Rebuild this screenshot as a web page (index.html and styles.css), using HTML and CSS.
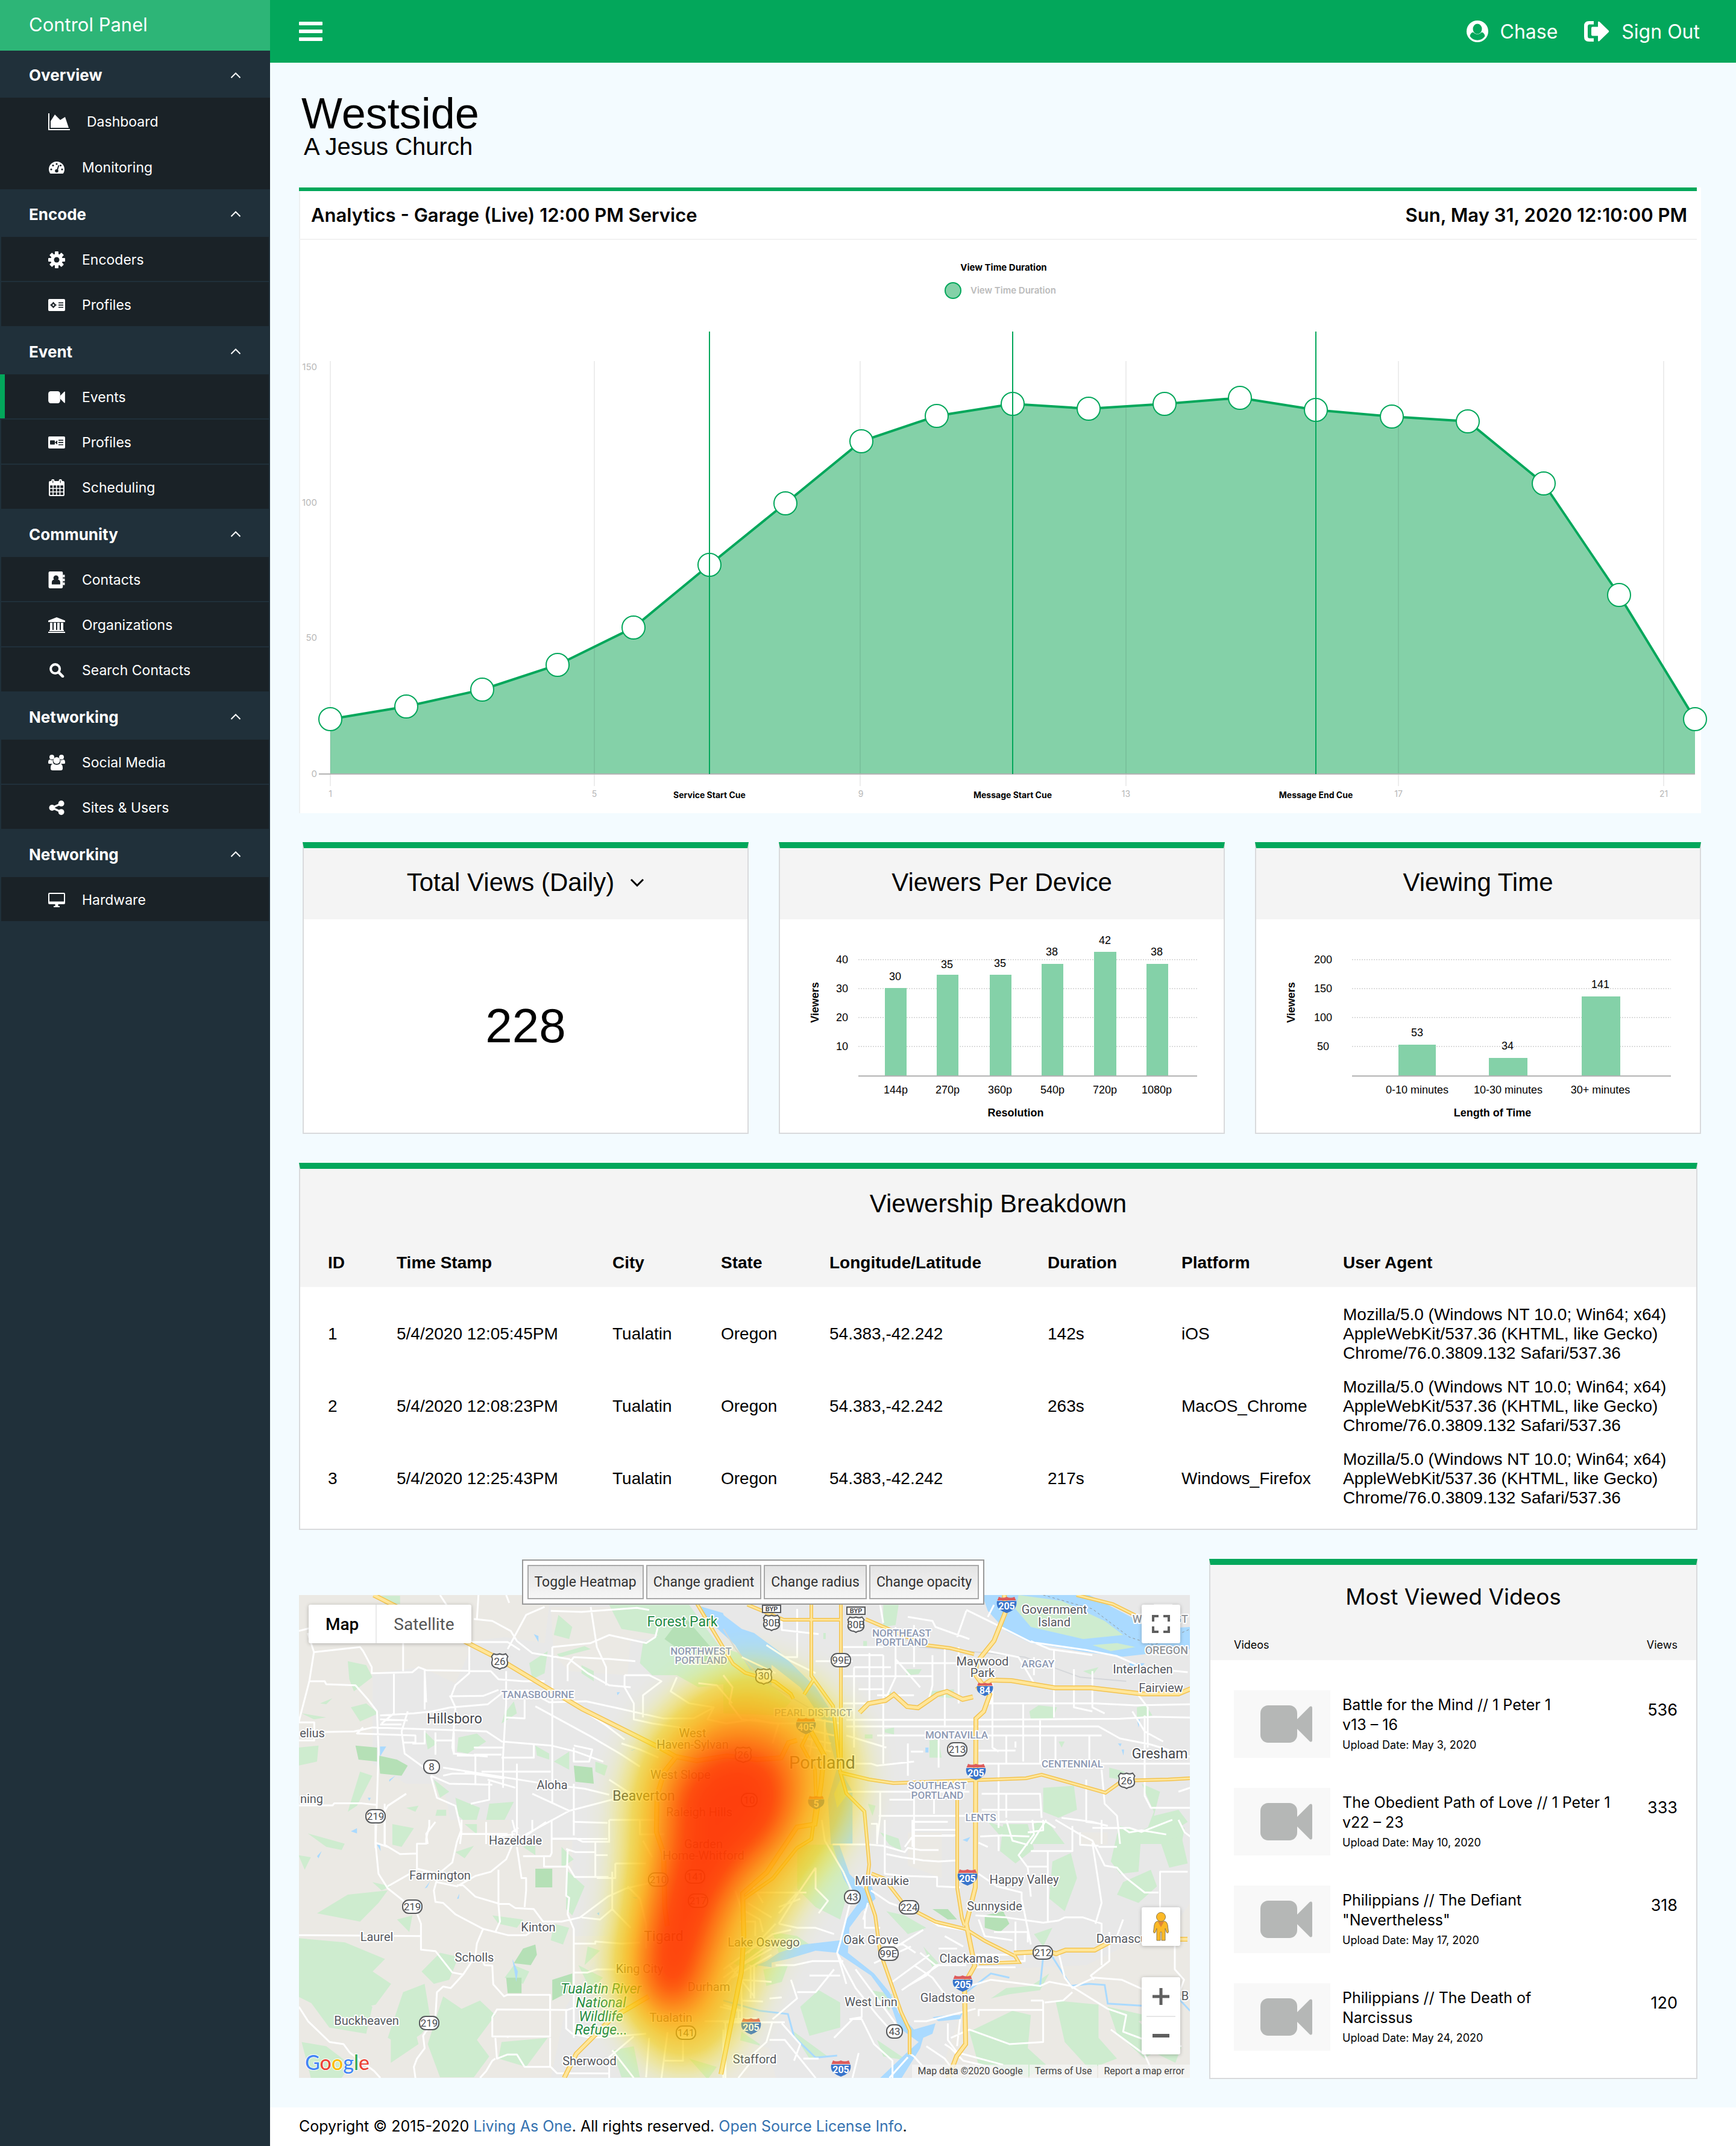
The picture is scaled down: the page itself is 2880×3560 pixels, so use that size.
FILE: index.html
```html
<!DOCTYPE html>
<html lang="en">
<head>
<meta charset="utf-8">
<meta name="viewport" content="width=device-width, initial-scale=1">
<title>Control Panel - Analytics</title>
<link rel="stylesheet" href="styles.css">
</head>
<body>

<svg class="sprite" aria-hidden="true">
  <symbol id="i-area" viewBox="0 0 36 28"><path d="M0 0h2v26h34v2H0z"/><path d="M4 24V13l7-11 9 9 8-5 6 18z"/></symbol>
  <symbol id="i-gauge" viewBox="0 0 26 20"><path d="M13 0a13 13 0 0 1 13 13c0 2.400-.7 4.500-1.800 6.300-.3.500-.7.700-1.200.7H3c-.5 0-.9-.2-1.200-.7A12.500 12.500 0 0 1 0 13 13 13 0 0 1 13 0z"/><g class="cut"><circle cx="4" cy="13" r="1.600"/><circle cx="7" cy="6.500" r="1.600"/><circle cx="13" cy="4" r="1.600"/><circle cx="19.500" cy="6.500" r="1.600"/><circle cx="22" cy="13" r="1.600"/><circle cx="13" cy="15.500" r="2.800"/><path d="M15.600 6l1.800.5-3 9.500-1.900-.6z"/></g></symbol>
  <symbol id="i-gear" viewBox="0 0 28 28"><circle cx="14" cy="14" r="10"/><g><rect x="11" width="6" height="28" rx="1"/><rect x="11" width="6" height="28" rx="1" transform="rotate(45 14 14)"/><rect x="11" width="6" height="28" rx="1" transform="rotate(90 14 14)"/><rect x="11" width="6" height="28" rx="1" transform="rotate(135 14 14)"/></g><circle class="cut" cx="14" cy="14" r="4.500"/></symbol>
  <symbol id="i-card-gear" viewBox="0 0 28 20"><rect width="28" height="20" rx="2"/><g class="cut"><circle cx="8.500" cy="10" r="3.600"/><path d="M7.500 5h2v10h-2zM3.500 9h10v2h-10z"/><path d="M17 5.500h8v1.700h-8zM17 9.200h8v1.700h-8zM17 12.900h8v1.700h-8z"/></g><circle cx="8.500" cy="10" r="1.500"/></symbol>
  <symbol id="i-video" viewBox="0 0 86 62"><rect width="61" height="62" rx="13"/><path d="M61 23L82 2q4-2 4 3v52q0 5-4 3L61 39z"/></symbol>
  <symbol id="i-card-video" viewBox="0 0 28 20"><rect width="28" height="20" rx="2"/><g class="cut"><rect x="3" y="6.500" width="8" height="7" rx="1"/><path d="M11 10l4-3.500v7zM17 5.500h8v1.700h-8zM17 9.200h8v1.700h-8zM17 12.900h8v1.700h-8z"/></g></symbol>
  <symbol id="i-calendar" viewBox="0 0 25 27"><path d="M2 3h21q2 0 2 2v20q0 2-2 2H2q-2 0-2-2V5q0-2 2-2z"/><rect x="4" width="5" height="7" rx="2"/><rect x="16" width="5" height="7" rx="2"/><path class="cut" d="M6 2h1v4H6zM18 2h1v4h-1zM2 10h4v4H2zM7.500 10h4v4h-4zM13 10h4v4h-4zM18.500 10H23v4h-4.500zM2 15.500h4v4H2zM7.500 15.500h4v4h-4zM13 15.500h4v4h-4zM18.500 15.500H23v4h-4.500zM2 21h4v4H2zM7.500 21h4v4h-4zM13 21h4v4h-4zM18.500 21H23v4h-4.500z"/></symbol>
  <symbol id="i-contact" viewBox="0 0 25 26"><rect width="22" height="26" rx="2"/><path d="M22 5h3v4h-3zM22 11h3v4h-3zM22 17h3v4h-3z"/><g class="cut"><circle cx="11.500" cy="10" r="4"/><path d="M5 20v-3q0-4 3.500-4.500 3 2 6 0Q18 13 18 17v3z"/></g></symbol>
  <symbol id="i-bank" viewBox="0 0 28 26"><path d="M14 0l14 5.500V8H0V5.500zM3 9h4v12H3zM9 9h4v12H9zM15 9h4v12h-4zM21 9h4v12h-4zM2 21h24v2H2zM0 24h28v2H0z"/></symbol>
  <symbol id="i-search" viewBox="0 0 25 25"><circle cx="10" cy="10" r="7.800" fill="none" stroke="currentColor" stroke-width="4.200"/><path d="M16 16l7 7" stroke="currentColor" stroke-width="4.600" stroke-linecap="round"/></symbol>
  <symbol id="i-users" viewBox="0 0 28 26"><circle cx="6" cy="4" r="4"/><circle cx="22" cy="4" r="4"/><path d="M0 14q-.3-6 3-6 3 2 5 .5-1 4 1 6.500H2q-2 0-2-1zM28 14q.3-6-3-6-3 2-5 .5 1 4-1 6.500h7q2 0 2-1z"/><circle cx="14" cy="9.500" r="5.500"/><path d="M4 23q-.3-8 4.500-8 5.500 3.500 11 0 4.800 0 4.500 8 0 3-3.500 3h-13Q4 26 4 23z"/></symbol>
  <symbol id="i-share" viewBox="0 0 23 22"><circle cx="18.500" cy="4.500" r="4.500"/><circle cx="4.500" cy="11" r="4.500"/><circle cx="18.500" cy="17.500" r="4.500"/><path d="M18.500 4.500L4.500 11l14 6.500" fill="none" stroke="currentColor" stroke-width="3"/></symbol>
  <symbol id="i-monitor" viewBox="0 0 28 24"><path fill-rule="evenodd" d="M2 0h24q2 0 2 2v15q0 2-2 2H16.500v3H19v2H9v-2h2.500v-3H2q-2 0-2-2V2q0-2 2-2zm0 2v12.500h24V2z"/></symbol>
  <symbol id="i-up" viewBox="0 0 18 10"><path d="M1.500 9L9 1.500 16.500 9" fill="none" stroke="currentColor" stroke-width="2"/></symbol>
  <symbol id="i-user" viewBox="0 0 36 36"><circle cx="18" cy="18" r="18"/><ellipse class="cut-bar" cx="18" cy="14" rx="7.500" ry="8.500"/><path class="cut-bar" d="M5.500 26q1-6 5.500-6.500 7 7 14 0 4.500.5 5.500 6.500a15 15 0 0 1-25 0z"/></symbol>
  <symbol id="i-out" viewBox="0 0 42 34"><path d="M16 0v5.500H9Q6 5.500 6 9v16q0 3.500 3 3.500h7V34H8q-8 0-8-8V8q0-8 8-8z"/><path d="M12 11.500q0-2 2-2h9V2q0-2.500 2.500-1l15 14.500q1.500 1.500 0 3L25.500 33q-2.500 1.500-2.500-1v-7.500h-9q-2 0-2-2z"/></symbol>
  <symbol id="s-us" viewBox="0 0 30 28"><path d="M5 1.500q5 2.500 10 0 5 2.500 10 0L28.500 6q-2.500 4-.5 9 1 7-6 9.500-5 .5-7 2.500-2-2-7-2.500-7-2.500-6-9.500 2-5-.5-9z" fill="#fff" stroke="#57595c" stroke-width="2"/></symbol>
  <symbol id="s-state" viewBox="0 0 34 24"><rect x="1" y="1" width="32" height="22" rx="10" fill="#fff" stroke="#57595c" stroke-width="2"/></symbol>
  <symbol id="s-route" viewBox="0 0 28 24"><rect x="1" y="1" width="26" height="22" rx="10" fill="#fff" stroke="#57595c" stroke-width="2"/></symbol>
  <symbol id="s-int" viewBox="0 0 34 28"><path d="M4 1q6.500 3 13 0 6.500 3 13 0l2.500 6h-31z" fill="#dc5c5c"/><path d="M1 8h32q1.500 8-3.500 13-5 4.500-12.500 7-7.500-2.500-12.500-7Q-.5 16 1 8z" fill="#3874cb"/></symbol>
</svg>

<div class="app">
  <aside class="sidebar">
    <div class="sidebar-title">Control Panel</div>
    <nav>
      <button class="group group-first" type="button">Overview<svg class="chev"><use href="#i-up"/></svg></button>
      <ul class="items items-plain">
        <li><a href="#"><svg class="ic ic-area"><use href="#i-area"/></svg>Dashboard</a></li>
        <li><a href="#"><svg class="ic"><use href="#i-gauge"/></svg>Monitoring</a></li>
      </ul>
      <button class="group" type="button">Encode<svg class="chev"><use href="#i-up"/></svg></button>
      <ul class="items">
        <li><a href="#"><svg class="ic ic-tall"><use href="#i-gear"/></svg>Encoders</a></li>
        <li><a href="#"><svg class="ic"><use href="#i-card-gear"/></svg>Profiles</a></li>
      </ul>
      <button class="group" type="button">Event<svg class="chev"><use href="#i-up"/></svg></button>
      <ul class="items">
        <li class="active"><a href="#"><svg class="ic"><use href="#i-video"/></svg>Events</a></li>
        <li><a href="#"><svg class="ic"><use href="#i-card-video"/></svg>Profiles</a></li>
        <li><a href="#"><svg class="ic ic-tall"><use href="#i-calendar"/></svg>Scheduling</a></li>
      </ul>
      <button class="group" type="button">Community<svg class="chev"><use href="#i-up"/></svg></button>
      <ul class="items">
        <li><a href="#"><svg class="ic ic-tall"><use href="#i-contact"/></svg>Contacts</a></li>
        <li><a href="#"><svg class="ic ic-tall"><use href="#i-bank"/></svg>Organizations</a></li>
        <li><a href="#"><svg class="ic ic-mid"><use href="#i-search"/></svg>Search Contacts</a></li>
      </ul>
      <button class="group" type="button">Networking<svg class="chev"><use href="#i-up"/></svg></button>
      <ul class="items">
        <li><a href="#"><svg class="ic ic-tall"><use href="#i-users"/></svg>Social Media</a></li>
        <li><a href="#"><svg class="ic ic-mid"><use href="#i-share"/></svg>Sites &amp; Users</a></li>
      </ul>
      <button class="group" type="button">Networking<svg class="chev"><use href="#i-up"/></svg></button>
      <ul class="items">
        <li><a href="#"><svg class="ic ic-mid"><use href="#i-monitor"/></svg>Hardware</a></li>
      </ul>
    </nav>
  </aside>

  <div class="page">
    <header class="topbar">
      <button class="burger" type="button" aria-label="Toggle menu"><span></span><span></span><span></span></button>
      <nav class="account">
        <a href="#"><svg class="ic-user"><use href="#i-user"/></svg>Chase</a>
        <a href="#"><svg class="ic-out"><use href="#i-out"/></svg>Sign Out</a>
      </nav>
    </header>

    <main class="content">
      <div class="brand">
        <h1>Westside</h1>
        <p>A Jesus Church</p>
      </div>

      <section class="chart-card">
        <div class="chart-head">
          <h2>Analytics - Garage (Live) 12:00 PM Service</h2>
          <time datetime="2020-05-31T12:10">Sun, May 31, 2020 12:10:00 PM</time>
        </div>
        <svg class="chart" viewBox="0 0 2324 951" role="img" aria-label="View Time Duration">
          <text class="c-strong" x="1167" y="51">View Time Duration</text>
          <circle cx="1083" cy="84" r="13" fill="#84d1a8" stroke="#03a75b" stroke-width="2"/>
          <text class="c-legend" x="1112" y="89">View Time Duration</text>
          <polygon fill="#84d1a8" points="50,886 50,795 176,774 302,746 427,705 553,643 679,539 805,437 931,334 1056,292 1182,272 1308,280 1434,272 1559,262 1685,282 1811,293 1937,301 2063,404 2188,589 2314,795 2314,886"/>
          <path class="c-grid" d="M50 201V906M488 201V906M929 201V906M1370 201V906M1822 201V906M2262 201V906"/>
          <path d="M31 886H2314" stroke="#b3b3b3" stroke-width="2"/>
          <polyline fill="none" stroke="#03a75b" stroke-width="4" points="50,795 176,774 302,746 427,705 553,643 679,539 805,437 931,334 1056,292 1182,272 1308,280 1434,272 1559,262 1685,282 1811,293 1937,301 2063,404 2188,589 2314,795"/>
          <g fill="#fff" stroke="#03a75b" stroke-width="2">
            <circle cx="50" cy="795" r="19"/><circle cx="176" cy="774" r="19"/><circle cx="302" cy="746" r="19"/><circle cx="427" cy="705" r="19"/><circle cx="553" cy="643" r="19"/><circle cx="679" cy="539" r="19"/><circle cx="805" cy="437" r="19"/><circle cx="931" cy="334" r="19"/><circle cx="1056" cy="292" r="19"/><circle cx="1182" cy="272" r="19"/><circle cx="1308" cy="280" r="19"/><circle cx="1434" cy="272" r="19"/><circle cx="1559" cy="262" r="19"/><circle cx="1685" cy="282" r="19"/><circle cx="1811" cy="293" r="19"/><circle cx="1937" cy="301" r="19"/><circle cx="2063" cy="404" r="19"/><circle cx="2188" cy="589" r="19"/><circle cx="2314" cy="795" r="19"/>
          </g>
          <path d="M679 152V886M1182 152V886M1685 152V886" stroke="#03a75b" stroke-width="2"/>
          <g class="c-y"><text x="28" y="216">150</text><text x="28" y="441">100</text><text x="28" y="665">50</text><text x="28" y="891">0</text></g>
          <g class="c-x"><text x="50" y="924">1</text><text x="488" y="924">5</text><text x="930" y="924">9</text><text x="1370" y="924">13</text><text x="1822" y="924">17</text><text x="2262" y="924">21</text></g>
          <text class="c-cue" x="679" y="926">Service Start Cue</text>
          <text class="c-cue" x="1182" y="926">Message Start Cue</text>
          <text class="c-cue" x="1685" y="926">Message End Cue</text>
        </svg>
      </section>

      <div class="stats">
        <section class="card">
          <h2 class="card-head"><button class="stat-toggle" type="button">Total Views (Daily)<svg viewBox="0 0 24 14"><path d="M2 2l10 10L22 2" fill="none" stroke="currentColor" stroke-width="3"/></svg></button></h2>
          <div class="stat-number">228</div>
        </section>
        <section class="card">
          <h2 class="card-head">Viewers Per Device</h2>
          <svg class="bars" viewBox="0 0 736 354" role="img" aria-label="Viewers per device">
            <path class="b-grid" d="M130 67H692M130 115H692M130 163H692M130 211H692"/>
            <path class="b-fill" d="M174 114h36v145h-36zM260 92h36v167h-36zM348 92h36v167h-36zM434 74h36v185h-36zM521 54h37v205h-37zM608 74h36v185h-36z"/>
            <path class="b-axis" d="M130 260H692"/>
            <g class="b-text"><text x="103" y="73">40</text><text x="103" y="121">30</text><text x="103" y="169">20</text><text x="103" y="217">10</text>
            <text x="191" y="101">30</text><text x="277" y="81">35</text><text x="365" y="79">35</text><text x="451" y="60">38</text><text x="539" y="41">42</text><text x="625" y="60">38</text>
            <text x="192" y="289">144p</text><text x="278" y="289">270p</text><text x="365" y="289">360p</text><text x="452" y="289">540p</text><text x="539" y="289">720p</text><text x="625" y="289">1080p</text></g>
            <text class="b-label" x="391" y="327">Resolution</text>
            <text class="b-label" transform="translate(64 138) rotate(-90)">Viewers</text>
          </svg>
        </section>
        <section class="card">
          <h2 class="card-head">Viewing Time</h2>
          <svg class="bars" viewBox="0 0 736 354" role="img" aria-label="Viewing time">
            <path class="b-grid" d="M159 67H688M159 115H688M159 163H688M159 211H688"/>
            <path class="b-fill" d="M236 208h62v51h-62zM386 230h64v29h-64zM540 128h64v131h-64z"/>
            <path class="b-axis" d="M159 260H688"/>
            <g class="b-text"><text x="111" y="73">200</text><text x="111" y="121">150</text><text x="111" y="169">100</text><text x="111" y="217">50</text>
            <text x="267" y="194">53</text><text x="417" y="216">34</text><text x="571" y="114">141</text>
            <text x="267" y="289">0-10 minutes</text><text x="418" y="289">10-30 minutes</text><text x="571" y="289">30+ minutes</text></g>
            <text class="b-label" x="392" y="327">Length of Time</text>
            <text class="b-label" transform="translate(64 138) rotate(-90)">Viewers</text>
          </svg>
        </section>
      </div>

      <section class="card breakdown">
        <h2>Viewership Breakdown</h2>
        <table>
          <colgroup><col class="w-id"><col class="w-time"><col class="w-place"><col class="w-place"><col class="w-coord"><col class="w-dur"><col class="w-plat"><col></colgroup>
          <thead><tr><th>ID</th><th>Time Stamp</th><th>City</th><th>State</th><th>Longitude/Latitude</th><th>Duration</th><th>Platform</th><th>User Agent</th></tr></thead>
          <tbody>
            <tr><td>1</td><td>5/4/2020 12:05:45PM</td><td>Tualatin</td><td>Oregon</td><td>54.383,-42.242</td><td>142s</td><td>iOS</td><td>Mozilla/5.0 (Windows NT 10.0; Win64; x64)<br>AppleWebKit/537.36 (KHTML, like Gecko)<br>Chrome/76.0.3809.132 Safari/537.36</td></tr>
            <tr><td>2</td><td>5/4/2020 12:08:23PM</td><td>Tualatin</td><td>Oregon</td><td>54.383,-42.242</td><td>263s</td><td>MacOS_Chrome</td><td>Mozilla/5.0 (Windows NT 10.0; Win64; x64)<br>AppleWebKit/537.36 (KHTML, like Gecko)<br>Chrome/76.0.3809.132 Safari/537.36</td></tr>
            <tr><td>3</td><td>5/4/2020 12:25:43PM</td><td>Tualatin</td><td>Oregon</td><td>54.383,-42.242</td><td>217s</td><td>Windows_Firefox</td><td>Mozilla/5.0 (Windows NT 10.0; Win64; x64)<br>AppleWebKit/537.36 (KHTML, like Gecko)<br>Chrome/76.0.3809.132 Safari/537.36</td></tr>
          </tbody>
        </table>
      </section>

      <div class="bottom">
        <section class="map-panel">
          <div class="map">
            <svg class="map-art" viewBox="0 0 1478 801" preserveAspectRatio="xMidYMid slice" role="img" aria-label="Heatmap of viewers around Portland">
              <defs>
                <filter id="heat" x="-30%" y="-20%" width="160%" height="140%" color-interpolation-filters="sRGB">
                  <feGaussianBlur stdDeviation="32"/>
                  <feColorMatrix values="0 0 0 1 0  0 0 0 1 0  0 0 0 1 0  0 0 0 1 0"/>
                  <feComponentTransfer>
                    <feFuncR type="table" tableValues=".9 .96 .96 .98 1 1 1 1 1"/>
                    <feFuncG type="table" tableValues=".95 .88 .8 .73 .64 .52 .4 .27 .2"/>
                    <feFuncB type="table" tableValues=".3 .15 0 0 0 0 0 0 0"/>
                    <feFuncA type="table" tableValues="0 .35 .6 .74 .82 .87 .91 .94 .95"/>
                  </feComponentTransfer>
                </filter>
              </defs>
              <rect width="1478" height="801" fill="#e8e8e8"/>

              <!-- countryside, parks and rivers, one group per map tile -->
              <g transform="translate(-16 -87) scale(.5102 .3333)">
                <path class="rural" d="M0 250H850L830 500 700 470 600 490 540 700 430 620 270 650V1100L380 1200 500 1200 540 1500H0zM850 320H1200V480L1110 480 1100 660 910 640 860 560z"/>
                <path class="park" d="M1040 310H1300L1400 520 1568 600V760L1440 700 1330 720 1260 660 1180 660 1140 600 1150 500 1200 460 1080 430zM875 360l45 60-10 60-50-20zM980 530l-100 40-10-15 90-40zM190 590l60 20 20 60-60 70-15-60zM780 600l60-60-10 110-40 30zM950 610l40 30 0 50-40-40zM200 820l50-20 40 50-60 40zM700 850l30-60 10 60-50 50zM440 940l40 60-30 30zM550 970l60-20 30 40-60 60-35-10zM800 1010l45 40 0 30-40-20zM860 1090l50-50v90zM995 1090l40 20-10 50-30-20zM30 1020l65-10-5 80-60 20zM230 1140l40 20-50 150-30 30zM470 1180l50 60-30 30zM540 1270l80 50-20 110-50-70zM650 1300l80-10-30 90-60 0zM300 265h60v40h-50zM330 1410l70 20-20 70h-50zM60 1450l80 50H70zM100 800l40-25-20 30zM480 1330h30v30h-35zM40 850l80 20-40 10zM380 1320l40-10-10 30z"/>
                <path class="park2" d="M215 1010l70 10v70l-60-10zM290 1060l60 20 35 30-20 50-70-10zM925 1110l60 10 5 80-60-10zM1220 480l60-120 90 160 60 100-120-40z"/>
                <path class="water" d="M1320 310l90 40 20 90 60 20 78 130V760L1500 640 1450 510 1400 440zM295 1015l20 0-20 50zM795 455l15 10 0 30zM1110 1035l25-15-20 15zM325 1180l20-20-20 30zM200 1440l25-15v20zM1065 745l10 0-8 15zM255 1270l10 0-5 15z"/>
              </g>
              <g transform="translate(704 -87) scale(.5102 .3333)">
                <path class="park" d="M0 600L100 640 220 790 180 860 0 850zM520 310h50l-10 100-40 10zM455 490h12v25h-12zM595 630l50 0-10 25-40 5zM670 740l80-10v45l-80-10zM995 840l30-30 60 10-15 60-70 0zM525 770l20-30v30zM525 930l30-10v35l-30-10zM460 955h25v20h-25zM670 985l30-5 10 90-40 0zM1090 990h20l-10 30zM1255 1120l50 20-10 40-40-10zM1345 820l30-10 20 50-50 10zM1040 1220l100-10 10 120-60 40-50-30zM1170 640l50-20-20 40zM1360 1200l60 40-20 120 80-30 30 60-60 60-70-30 20-80zM1340 1450l100-80 60 50-10 80h-150zM1010 1400l40-20 60 120h-120zM860 1390l60 30-20 40zM470 1300l25 10-10 50zM325 450h8v30h-8z"/>
                <path class="water" d="M0 360L60 430 100 450 180 540 300 720 360 860 370 1100 420 1240 420 1500H350L340 1280 370 1120 330 900 250 720 150 600 40 500 0 440zM842 261H1190L1400 430 1518 420V530L1300 568 1180 545 1000 500 920 440 860 340zM1320 600l50 0-20 40-30-10zM1345 880l10 0-5 40zM1283 1000l12 0-4 15zM1295 1030l8 0-2 30zM778 1480l25-15-10 25zM657 1020h10v25h-10z"/>
                <path class="park" d="M960 261L1100 290 1240 390 1300 460 1170 480 1000 420 950 330zM1200 510l80-10 60 20-80 20zM380 1180l30 60-40 80-10-70z"/>
                <path d="M0 430L40 530 130 690 210 760 320 860M540 440l100 80 220 30 120 20 180 100 150 20" fill="none" stroke="#d5d7da" stroke-width="2" vector-effect="non-scaling-stroke"/>
                <path d="M1040 261L1200 330 1320 470 1400 510 1518 430" fill="none" stroke="#8e979e" stroke-width="1" stroke-dasharray="4 4" vector-effect="non-scaling-stroke"/>
              </g>
              <g transform="translate(-16 373) scale(.5102 .3444)">
                <path class="rural" d="M31 0H720V90L920 100V560H1040L900 900 850 1243H31z"/>
                <path class="park" d="M60 65l120 50-10 30-50-15zM335 20l70 20-40 90-30-10zM190 360l130-20-30 60-60 90-140-40zM30 170l40 10-20 60zM270 300l60 20-30 20zM540 155l60-30-30 60zM570 20h40v50zM760 130l40-20v60zM885 130l40 60-40 40zM900 240l60 80-40 140-20-30zM660 460l100 20-20 40-60-20zM860 500l50 20-20 80-40-20zM350 480l50-20-10 80zM31 570l150 20 130 80-40 60 60 60-50 100-60 20-40-60-100 40-81-60zM60 780l130 20 80 100-20 130-120-30-60-120zM370 830l70-40 20 180-30 60-60 60-50-40zM490 640l60 20-30 110-50 20-40-60zM500 850l60 60 60-40 50 70-60 120 40 80-50 100h-110l-40-160zM40 1070l80 20 80 90-30 63H70zM690 1070l150-20-70 140-90-40zM330 1050l80-30 10 60-90 90zM730 700l50 30-20 60-60-30zM940 700l80 60-40 60zM1050 1110l70-20 20 150h-60zM970 610l40 20-50 70zM1300 1150l90 40-30 60zM1470 1020l60 60-20 100-50-50zM1470 600l70 30-20 80-50-30z"/>
                <path class="park2" d="M760 620l40-20 5 50-20 50-55-10zM705 760h50v75h-45zM855 770l65-30v80l-65 50zM800 235h55v90h-55z"/>
                <path class="water" d="M200 55l20-15v25zM90 175l15-25-10 35zM285 120l10 0 2 30zM440 330l18-35-10 30zM545 380l8-25-2 25zM1000 450l8-5-1 15zM1115 370l20 5-10 5zM1520 700l48-30v40zM725 670l18 60-5 50z"/>
              </g>
              <g transform="translate(704 373) scale(.5102 .3444)">
                <path class="rural" d="M1518 400L1480 480 1180 700 850 720 780 900 700 1243H1518zM600 60h110v220l-110-60zM1160 60h90v60h-90zM0 1040l150 60 20 143H0z"/>
                <path class="park" d="M240 120l120 0 50 200-30 160-80-60-60-90zM910 20l80 0 20 120-60 70-50-60zM1290 30l70 20-10 200-60 10-30-60 20-130zM1420 100l70-20 20 130-60 20zM1070 200l60-40 20 120-40 160-50-60zM1300 300l90-60 20 80-60 80-70-40zM530 440l60 20 70 60-60 30zM510 60l60 30 10 60-40-30zM650 610l50 80-20 20zM160 540l80 20 60 60-120 20zM130 720l80-20-20 80-50 20zM250 900l60-80 70 60 0 120-100 40zM220 1010l120 130-60 10zM480 820l70 20-10 80zM800 1020l140-100 60 20-10 160 60 80-60 60-160-60zM1080 870l140 20 0 160 60 100-90 50-80-130zM870 860l60-20 100-20 30-80-60 60-80 10zM1250 900l120 40 10-50h90v60l-120 20 80 120-60 60-90-120zM1400 1040l90 50-20 80-70-50zM500 1060l100 100-80-20zM20 680l70-20-20 60zM1010 550l60-30-30 90z"/>
                <path class="park2" d="M680 430l50 0 30 50-30 0zM850 460l60-20 20 60-30 40-50-20z"/>
                <path class="water" d="M350 0H385L375 110 410 260 470 350 470 260 495 380 450 440 410 520 405 640 490 740 540 830 570 930 620 1010 690 980 680 1030 650 1050 640 1100 580 1243H510L590 1130 635 1070 570 1000 540 870 480 750 400 670 370 640 300 630 210 670 120 700 180 640 260 600 380 580 400 480 440 400 390 280 355 120zM680 950l50-10 40 0 15-40-15 60-70 10z"/>
                <path d="M790 830l80-90 60 20M1030 800l10-140 20 0M1070 660l60 140 60-10 50 5 10 90 110 10M1480 860l38 60M0 870l120 50 90 15 20 110 70 100 70-10" fill="none" stroke="#aadaff" stroke-width="3" vector-effect="non-scaling-stroke"/>
              </g>

              <!-- local roads -->
              <g class="road" transform="translate(-16 -87) scale(.5102 .3333)">
                <path d="M80 545L230 520 240 540 268 620V650L400 645 420 620 445 635 655 640 680 680 760 690 830 690M31 440L80 420 350 380M60 450L80 545 65 690 31 890M65 690h50l5 15 95 5 40 70 30 60 5 200-10 480M370 500v140M585 500v150l-45 60-15 60 15 50-10 200 5 30 110 15M440 635l5 160M520 765l110-2 50-30M295 860l110-10 60-10 60-20 120-15 50-60 80-10 70 60 120-5 90 30 160 55 100 0 60-50M340 650v200l-40 50M385 840l-20 100 10 110 90 100M31 945l180-5 60-20 290 15 80 5 50 50 160 20 80 30 90 50M31 895h50v90h-50M295 905h70M295 880l90 5M240 920l-20 30 190 10 0 35h-40M475 945v110M535 945v110M475 985h60M440 935v65h-40M545 1060h60v140M600 1020h95M600 1055h90M570 1145l130 30M690 1070h105V1000M625 1140h225M500 1120l350 85 110 20 80 30M440 830V640M705 640V800l-10 260v160M705 870l60 5V780M800 815l180 150 100 90 60 60M855 1300V780 520M855 520L980 500 1040 460 1100 480 1160 500 1190 470 1200 410M600 380l60 10 60 50 20 50 50 60 120 30 60 70 70 60 70 10M590 495h120l40 40M710 530l60-170 60-40M980 320l20 200 30 100 0 90M615 261l-5 120M490 261l30 70M715 300l-10-39M905 690V610l20-40 120 10 80 10M850 340l100 5 180-20 40 10M1090 660h80l40 30-60 70V870M1090 660v60l30 80v80l60 20 90 20M460 1160l60 40 140 5M500 1160l30-10h60M645 1180l90 40M740 1100v370M650 1180v100l-60 20M380 1250l-60 60-30 80M925 1020v70h50l10-60-60-20M925 1200v190l110 5M1040 1380h150M790 1250l120 85 150-60 80-20M910 1335L760 1460 740 1500M31 1308l110 0 5-10 90 0 50 8M310 1300v200M460 1160l20 110 60 40 20 130-5 60M560 1450h150M640 1440v60M725 1500v-60l20-20M855 1475h180M450 1500l-5-50 30-60M1080 1000l60 30 60 40M1260 670l-20 70 60 60 80 20-20 60 60 20 90-20M1330 700l60 10 50 90M1040 1180l60 60 60 30M970 850l60 60 60 70"/>
              </g>
              <g class="road" transform="translate(704 -87) scale(.5102 .3333)">
                <path d="M140 510l80 80 80 60M60 570l110 80M190 375v60l120 20M240 330v240h-40M390 520h130M390 560h130M300 590h120M425 620h120M390 665h290M520 560V1100M425 620v400M475 550v250M440 730h80M390 800h130M560 420v250l-30 100M600 370l80 20 10 30 110 60M620 410V620M680 560v150l-10 60M720 520v400M765 520v280M520 400l-10-90M790 335l80 60 130 100 180 40 100 30 90 60 140 20M1000 490l60 40 140 30M760 470l30-130M880 310l-20 60M560 600h240M500 760h120M860 540l100 30 50 130M1010 570v90M1075 530v340M1140 630v190l60 20M1200 640v180l40 30M870 700v100M860 800h350l130 10 178-5M400 882h430l460-5 110-10 118 4M400 915h820l70 60 100 30 128 60M830 960h400M1190 960v160M1080 960v140M1030 880v220M975 800v290M920 960v140M875 700v320l20 20M500 960h200v160M600 1000v160M650 1040h-40M400 960l130 60M830 1100h688M400 1100h80l20 10 120-20M830 1035h120M895 1100v320M950 990l0 30M840 1250h190l5 120M400 1240h400M540 1280h80M620 1180v420M505 1360h300M620 1390h110M620 1430h140M620 1460h130M860 1390h190l30 30M510 1240v120l-10 120M685 1250v100M480 1400h20v100M840 1330h190M920 1250v120M1370 860v400l20 60 128 0M1230 1130l10 170 40 60 10 140M1180 1180v210l50 10v100M1050 1380l-50 120M1330 840l40 100 60 50M1350 760l30 60v200M1100 1370l100 20 50 20M560 580l80 140M1480 1240l38-20M1400 310h60M1200 1420h120l40 20 100-60"/>
                <path d="M380 900l-80-20M360 960l-90-30M350 1000l-100-30M350 1040l-80-30M330 880v200M300 880l-20 180M0 660l30 60-10 80 40 80 120 20M100 880l60 20 80 0M180 900l-20 100"/>
              </g>
              <g class="road" transform="translate(-16 373) scale(.5102 .3444)">
                <path d="M280 0V110L290 260 320 330 380 400 415 450 428 500V625L475 632 530 735 565 745 525 810 500 803 480 830 475 950 435 1040 440 1100 415 1150 405 1190 410 1243M310 0v120l50 45 55-3M280 110l40 20M415 240V115h30V90l10-60V0M31 555l395 5M415 240L320 320M415 235l70 25 45-55 15-100 15-60V0M485 260l-15 80 5 55 25 5 40 55 90 70 80 30h60l20-20M480 300l65 20 60-50 50-20 50-60 20-70 110-110M545 315h20l40 55 80 35h30l20 20 60 5 30 60 60 0 60-20 90-100 60-40 90-30M680 240v170l5 80-15 50M740 130l15 150h15v60l-5 80M630 525l-20 70-5 60-40 90M560 68h110l15 10 50-10M640 10v60M725 0l10 60M790 0v50M853 0v160l-5 15H760M828 180v45h80l20 50h110M905 145l-5 220 10 10-5 80 20 70V1050M925 75v-75M853 90h80l20 15h90M900 140l30 15 65 0M995 105v170M995 170h40M1040 0v105M925 525v210l45 0 30-15 60 0M925 596h70v-10l85 10 60-5M950 470l60 10 40-50 0-180M1060 210h100M1060 210v70l-60 0M630 685l5 15 25 2 3 90 35 58 10-7H848v200H660V950l15-37 230 2 20-10M670 1050l5 100 35-20h30l25 60H848V1050M710 1050v-8M670 1150l-10 10-20 50-20 33M900 915v90l20 25 60 20 100-10 80-10M850 1190l20 30 170 2M1040 1243v-100l80-100M1050 1110l70 133M31 900l30 70 70 100 45 10 20 40 80 90 20 33M1170 1050l-10 190M1210 1243l20-220M1280 1020v140l-60 0M1140 0v70h80M1150 100l30 80M1100 320l40 60 20 120M1050 430l60 90M1160 500v120M1418 970V1243M1350 970h150M1400 900l60 20 0 60M1440 960l80-5M1470 740v130l70 5M1568 620L1470 700 1420 790M1568 650L1440 760M1500 700v160M1568 780l-100-10M1465 490h50v70M1450 340l20 90 60 50 10 60M1520 1130l-60 113M1500 300l40 100M1490 400l78 70"/>
              </g>
              <g class="road" transform="translate(704 373) scale(.5102 .3444)">
                <path d="M355 118H470L520 125 590 155 600 135 640 145 700 145M320 0l10 100 60 150 30 100-40 240-10 50 20 60 40 110 70 130 60 100M370 640l30 150M525 0V260l60 10 110 5 0 45 75 5M530 165l50 15 70 15 50 5 60-5M615 0v130M590 130l30-60M710 75h50M835 80l70-5 90 5M895 80l0 70M830 110l30 20M920 0l20 100 50 20M1005 0l5 70-50 100 30 60 10 140M1040 0v50l-50 10M1000 150h135V30M1055 150v340M990 225h65M1080 0l80 70 40 30 40 120 40 10 30 50 60 70h45M1160 60v60l60 5M1230 0v80M1220 130h60M1480 0l20 60 18 20M1230 40h70l20 20 40-10 80 20M1200 110l30 290-20 100M1420 350V250h90M1420 350v80M830 260l60 60 80 30 0 40M970 380l30 220M820 460l100 10 120 25 50-10 20-15h60l60 30v200M830 480l20 80 90 20M950 490v170M880 540h110v50M480 340l60 60 100 50 60 60 80 20M460 440l0 80h50M470 400l-15 80M525 600h60l40 40M520 650l130-120M550 780l120-130M580 820l120-120M490 690l120-80M600 800l60-50 30-50M720 560l60 50M640 640l50 60h100M620 700l60 60 60 120M700 620h60M300 230v100l40 60-30 60M300 230l-60 130-60 140M240 350l-60 100M100 350l170 0M250 380l-70 40M180 500l60 20 60 0 60 30M170 500L80 640M0 720l160-170 60-20M20 700l80 150M100 700l0 160M0 760L150 600M170 700l60 0 60-20 100 0M280 750h100M240 830h60l60-110M220 770l20 90-80 100M0 975h200M60 860v110M190 980l60 100-20 80M150 860l40-5M160 970l-20 100-60 80M420 960l-60 90M450 860l0 90-40 10M430 720L560 980M410 960l40 0 40 120 60 80 0 90M0 1243V1010M0 890l60 30M620 970l40 0 160-60M830 945v-30H1040M1040 870v200l-110 10-130-70-60 40M1040 870l-40 0M780 810l90-40 160 30 30-20 70 20 120 110 60 30-10 80 90 50 100 20M1135 830l-30 40-60 10M1090 640l20 120 25 50 70-50 90 10 90 60M1205 770l-10-20 60-70 0-140M730 980l0 80 30 60 150 60M720 1080l20 20 40 60 180 60M770 960l-10 130M620 1140l60 100M600 1120l20 20M660 1090l60 60 40 80M1260 1010l110 120 30 100M1468 600v120l30 50-20 80 40 10M1418 600v-150M1300 480l-20 80M820 650h110M820 710h130M870 680h110v-50M300 1243L200 1060 150 1060M420 1243l20-120M540 1243l60-100M260 1150l50 0"/>
              </g>

              <!-- highways: casing below, fill above -->
              <g fill="none" stroke="#f3c34e">
                <path stroke-width="8" d="M124 0L330 105 470 189 600 254 625 268 660 275 710 267 760 273 800 270 812 245 826 241M626 268l-20 25-12 40-1 60 12 36 2 90 4 30M1170 0l3 26-20 50-29 36-2 20 24 33-10 28-13 12-1 280-15 60 14 70-17 30 2 100-15 20-30 80-40 50-70 50-60 1-30-40-25-15-40-5-60-22-54 8M700 795l34-170 4-60-2-70 40-35 50-75 30-5 10-65 5-50-25-45M930 195l15-15 28-5 14-10 22 20 18 2 32-22 16-5 26 13 17-4M1124 157l24-16 34 1 72 12h60l85 10 60 0 24-10M440 801l20-40 60-60 60-35M1474 571h-28M1350 573l-30 16h-48l-16 6-12-4-58 3"/>
                <path stroke-width="6" d="M660 14l60 100 20 15 50 15 26 20 4 8M850 14v120l36 50 12 110 10 35 30 30 8 88-5 40 15 45 8 60 35 100 14 30v40M899 14v160l0 100M744 16l60 25H900M940 40l100 43 40 5 40 10M1290 0l60 15 40 20M896 294l50 12 40 6 220-8 26-6 106 30 28-20 76-2 54-3M1092 306v180l8 50 4 12M950 462l20 8 36 46 50 26 50 12 32 20 50 25 6 10-66 2M838 165l16-25M844 230l-10 20 22 40 2 55-8 60-24 15-40 50-50 35"/>
              </g>
              <g fill="none" stroke="#ffe69a">
                <path stroke-width="5" d="M124 0L330 105 470 189 600 254 625 268 660 275 710 267 760 273 800 270 812 245 826 241M626 268l-20 25-12 40-1 60 12 36 2 90 4 30M1170 0l3 26-20 50-29 36-2 20 24 33-10 28-13 12-1 280-15 60 14 70-17 30 2 100-15 20-30 80-40 50-70 50-60 1-30-40-25-15-40-5-60-22-54 8M700 795l34-170 4-60-2-70 40-35 50-75 30-5 10-65 5-50-25-45M930 195l15-15 28-5 14-10 22 20 18 2 32-22 16-5 26 13 17-4M1124 157l24-16 34 1 72 12h60l85 10 60 0 24-10M440 801l20-40 60-60 60-35M1474 571h-28M1350 573l-30 16h-48l-16 6-12-4-58 3"/>
                <path stroke-width="3" d="M660 14l60 100 20 15 50 15 26 20 4 8M850 14v120l36 50 12 110 10 35 30 30 8 88-5 40 15 45 8 60 35 100 14 30v40M899 14v160l0 100M744 16l60 25H900M940 40l100 43 40 5 40 10M1290 0l60 15 40 20M896 294l50 12 40 6 220-8 26-6 106 30 28-20 76-2 54-3M1092 306v180l8 50 4 12M950 462l20 8 36 46 50 26 50 12 32 20 50 25 6 10-66 2M838 165l16-25M844 230l-10 20 22 40 2 55-8 60-24 15-40 50-50 35"/>
              </g>

              <!-- route shields -->
              <g>
                <use href="#s-us" x="318" y="96" width="30" height="28"/><use href="#s-us" x="756" y="121" width="30" height="28"/><use href="#s-us" x="722" y="251" width="30" height="28"/><use href="#s-us" x="767" y="32" width="34" height="28"/><use href="#s-us" x="907" y="35" width="34" height="28"/><use href="#s-us" x="1358" y="294" width="30" height="28"/>
                <use href="#s-route" x="206" y="273" width="28" height="24"/><use href="#s-route" x="733" y="328" width="28" height="24"/><use href="#s-route" x="904" y="489" width="28" height="24"/><use href="#s-route" x="974" y="712" width="28" height="24"/>
                <use href="#s-state" x="110" y="355" width="34" height="24"/><use href="#s-state" x="882" y="96" width="34" height="24"/><use href="#s-state" x="1075" y="244" width="34" height="24"/><use href="#s-state" x="171" y="505" width="34" height="24"/><use href="#s-state" x="199" y="698" width="34" height="24"/><use href="#s-state" x="579" y="460" width="34" height="24"/><use href="#s-state" x="640" y="455" width="34" height="24"/><use href="#s-state" x="645" y="495" width="34" height="24"/><use href="#s-state" x="625" y="714" width="34" height="24"/><use href="#s-state" x="995" y="506" width="34" height="24"/><use href="#s-state" x="961" y="583" width="34" height="24"/><use href="#s-state" x="1217" y="581" width="34" height="24"/>
                <use href="#s-int" x="1157" y="2" width="34" height="28"/><use href="#s-int" x="1124" y="142" width="28" height="28"/><use href="#s-int" x="824" y="203" width="34" height="28"/><use href="#s-int" x="1106" y="279" width="34" height="28"/><use href="#s-int" x="844" y="330" width="28" height="28"/><use href="#s-int" x="1092" y="454" width="34" height="28"/><use href="#s-int" x="1084" y="630" width="34" height="28"/><use href="#s-int" x="733" y="701" width="34" height="28"/><use href="#s-int" x="882" y="771" width="34" height="28"/>
                <g fill="#fff" stroke="#57595c" stroke-width="2"><rect x="769" y="17" width="30" height="12"/><rect x="909" y="20" width="30" height="12"/></g>
              </g>
              <g class="m-num">
                <text x="333" y="116">26</text><text x="771" y="140">30</text><text x="737" y="271">26</text><text x="784" y="52">30B</text><text x="924" y="55">30B</text><text x="1373" y="314">26</text><text x="220" y="291">8</text><text x="747" y="346">10</text><text x="918" y="507">43</text><text x="988" y="730">43</text><text x="127" y="373">219</text><text x="899" y="114">99E</text><text x="1092" y="262">213</text><text x="188" y="523">219</text><text x="216" y="716">219</text><text x="596" y="478">210</text><text x="657" y="473">141</text><text x="662" y="513">217</text><text x="642" y="732">141</text><text x="1012" y="524">224</text><text x="978" y="601">99E</text><text x="1234" y="599">212</text>
                <g class="m-byp"><text x="784" y="27">BYP</text><text x="924" y="30">BYP</text></g>
                <g class="m-int"><text x="1174" y="24">205</text><text x="1138" y="164">84</text><text x="841" y="225">405</text><text x="1123" y="301">205</text><text x="858" y="352">5</text><text x="1109" y="476">205</text><text x="1101" y="652">205</text><text x="750" y="723">205</text><text x="899" y="793">205</text></g>
              </g>

              <g class="m-label">
                <g class="m-area"><text x="667" y="99">NORTHWEST</text><text x="667" y="114">PORTLAND</text><text x="396" y="171">TANASBOURNE</text><text x="1000" y="69">NORTHEAST</text><text x="1000" y="84">PORTLAND</text><text x="1226" y="120">ARGAY</text><text x="853" y="201">PEARL DISTRICT</text><text x="1091" y="238">MONTAVILLA</text><text x="1283" y="286">CENTENNIAL</text><text x="1059" y="322">SOUTHEAST</text><text x="1059" y="338">PORTLAND</text><text x="1131" y="375">LENTS</text></g>
                <g class="m-state"><text x="1475" y="46">WASHINGT</text><text x="1475" y="98">OREGON</text></g>
                <g class="m-town"><text x="22" y="236">elius</text><text x="21" y="345">ning</text><text x="420" y="322">Aloha</text><text x="633" y="305">West Slope</text><text x="653" y="236">West</text><text x="653" y="255">Haven-Sylvan</text><text x="664" y="367">Raleigh Hills</text><text x="1134" y="117">Maywood</text><text x="1134" y="136">Park</text><text x="1400" y="130">Interlachen</text><text x="1430" y="161">Fairview</text><text x="359" y="414">Hazeldale</text><text x="234" y="472">Farmington</text><text x="397" y="558">Kinton</text><text x="129" y="574">Laurel</text><text x="291" y="608">Scholls</text><text x="112" y="713">Buckheaven</text><text x="482" y="780">Sherwood</text><text x="671" y="420">Garden</text><text x="671" y="439">Home-Whitford</text><text x="565" y="627">King City</text><text x="680" y="657">Durham</text><text x="617" y="708">Tualatin</text><text x="756" y="777">Stafford</text><text x="771" y="583">Lake Oswego</text><text x="967" y="481">Milwaukie</text><text x="1203" y="479">Happy Valley</text><text x="1154" y="523">Sunnyside</text><text x="949" y="579">Oak Grove</text><text x="1370" y="577">Damascus</text><text x="1112" y="610">Clackamas</text><text x="1076" y="675">Gladstone</text><text x="949" y="682">West Linn</text><text x="1470" y="672">B</text><text x="1253" y="31">Government</text><text x="1253" y="52">Island</text></g>
                <g class="m-city"><text x="258" y="213">Hillsboro</text><text x="572" y="341">Beaverton</text><text x="1428" y="271">Gresham</text><text x="605" y="574">Tigard</text></g>
                <text class="m-metro" x="868" y="288">Portland</text>
                <text class="m-park" x="636" y="52">Forest Park</text>
                <g class="m-park m-refuge"><text x="501" y="661">Tualatin River</text><text x="501" y="684">National</text><text x="501" y="707">Wildlife</text><text x="501" y="729">Refuge...</text></g>
              </g>

              <g filter="url(#heat)">
                <path opacity=".34" d="M740 115L850 150 915 225 930 330 890 420 840 480 800 550 760 640 730 720 680 780 600 785 545 710 510 620 530 520 540 430 540 340 570 240 640 165z"/>
                <path opacity=".42" d="M690 190L790 200 850 250 845 345 800 430 725 510 695 610 670 700 590 705 560 640 575 520 590 400 600 290z"/>
                <path opacity=".95" d="M650 285Q710 235 785 265 830 320 795 395L730 450 695 520 660 630 635 685 580 675 570 600 595 500 620 420 620 330z"/>
              </g>
              <text class="m-logo" x="10" y="788"><tspan fill="#4285f4">G</tspan><tspan fill="#ea4335">o</tspan><tspan fill="#fbbc05">o</tspan><tspan fill="#4285f4">g</tspan><tspan fill="#34a853">l</tspan><tspan fill="#ea4335">e</tspan></text>
            </svg>
            <div class="map-type"><button class="on" type="button">Map</button><button type="button">Satellite</button></div>
            <button class="map-btn map-full" type="button" aria-label="Full screen"><svg viewBox="0 0 30 30"><path d="M2 11V2h9M19 2h9v9M28 19v9h-9M11 28H2v-9" fill="none" stroke="#5f5f5f" stroke-width="4"/></svg></button>
            <div class="map-side">
              <button class="map-btn" type="button" aria-label="Street View"><svg class="peg" viewBox="0 0 26 48"><path d="M7 15h12q4 1 5 6l1.500 12q-1 3-3 1L20 27v20H14V33h-2v14H6V27l-2.500 7q-2 2-3-1L2 21q1-5 5-6z" fill="#fbb927" stroke="#8c7a52" stroke-width="1"/><circle cx="13" cy="8" r="7.500" fill="#fbb927" stroke="#8c7a52"/><path d="M8 16h10l-5 9z" fill="#e08538"/></svg></button>
              <div class="map-zoom">
                <button type="button" aria-label="Zoom in"><svg viewBox="0 0 28 28"><path d="M0 11.500h11.500V0h5v11.500H28v5H16.500V28h-5V16.500H0z" fill="#5f5f5f"/></svg></button>
                <button type="button" aria-label="Zoom out"><svg viewBox="0 0 28 28"><path d="M0 11h28v6H0z" fill="#5f5f5f"/></svg></button>
              </div>
            </div>
            <div class="map-terms"><span>Map data ©2020 Google</span><a href="#">Terms of Use</a><a href="#">Report a map error</a></div>
          </div>
          <div class="map-tools"><button type="button">Toggle Heatmap</button><button type="button">Change gradient</button><button type="button">Change radius</button><button type="button">Change opacity</button></div>
        </section>

        <section class="card videos">
          <h2>Most Viewed Videos</h2>
          <table>
            <thead><tr><th>Videos</th><th class="num">Views</th></tr></thead>
            <tbody>
              <tr><td><div class="video"><span class="thumb"><svg><use href="#i-video"/></svg></span><p>Battle for the Mind // 1 Peter 1<br>v13 – 16<small>Upload Date: May 3, 2020</small></p></div></td><td class="num">536</td></tr>
              <tr><td><div class="video"><span class="thumb"><svg><use href="#i-video"/></svg></span><p>The Obedient Path of Love // 1 Peter 1<br>v22 – 23<small>Upload Date: May 10, 2020</small></p></div></td><td class="num">333</td></tr>
              <tr><td><div class="video"><span class="thumb"><svg><use href="#i-video"/></svg></span><p>Philippians // The Defiant<br>"Nevertheless"<small>Upload Date: May 17, 2020</small></p></div></td><td class="num">318</td></tr>
              <tr><td><div class="video"><span class="thumb"><svg><use href="#i-video"/></svg></span><p>Philippians // The Death of<br>Narcissus<small>Upload Date: May 24, 2020</small></p></div></td><td class="num">120</td></tr>
            </tbody>
          </table>
        </section>
      </div>
    </main>

    <footer class="footer"><p>Copyright © 2015-2020 <a href="#">Living As One</a>. All rights reserved. <a href="#">Open Source License Info</a>.</p></footer>
  </div>
</div>
</body>
</html>
```
FILE: styles.css
```css
* { box-sizing: border-box; }
body { margin: 0; background: #f3fbff; color: #000; font-family: Inter, "Liberation Sans", sans-serif; }
h1, h2, p, ul { margin: 0; padding: 0; font-weight: 400; }
ul { list-style: none; }
a { color: inherit; text-decoration: none; }
button { margin: 0; padding: 0; border: 0; background: none; color: inherit; font: inherit; cursor: pointer; }
table { border-collapse: collapse; width: 100%; table-layout: fixed; }
th, td { padding: 0; text-align: left; }
svg { display: block; fill: currentColor; }
.sprite { position: absolute; width: 0; height: 0; }
.cut { fill: #1a2227; }
.cut-bar { fill: #03a75b; }

.app { display: grid; grid-template-columns: 448px minmax(0, 1fr); min-height: 100vh; }
.page { display: flex; flex-direction: column; }

/* Sidebar */
.sidebar { background: #20303a; color: #fff; }
.sidebar-title { height: 84px; padding-left: 48px; background: #2db577; font-size: 31px; font-weight: 400; line-height: 82px; }
.group { display: flex; align-items: center; justify-content: space-between; width: 100%; height: 79px; padding: 3px 48px 0; font-size: 26px; font-weight: 700; }
.group-first { height: 78px; }
.chev { width: 18px; height: 10px; }
.items { display: flex; flex-direction: column; gap: 2px; padding: 0 2px 1px; }
.items a { display: flex; align-items: center; gap: 28px; height: 73px; padding: 3px 0 0 78px; background: #1a2227; font-size: 23px; font-weight: 400; }
.items-plain { gap: 0; padding: 0; }
.items-plain a { height: 76px; padding-left: 80px; }
.items .active { margin-left: -2px; border-left: 8px solid #03a75b; }
.items .active a { padding-left: 72px; }
.ic { width: 28px; height: 20px; }
.ic-area { width: 36px; height: 28px; }
.ic-tall { height: 28px; }
.ic-mid { height: 24px; }

/* Top bar */
.topbar { display: flex; align-items: center; justify-content: space-between; height: 104px; padding: 0 60px 0 48px; background: #03a75b; color: #fff; }
.burger { display: flex; flex-direction: column; gap: 7px; width: 39px; }
.burger span { height: 6px; border-radius: 1px; background: #fff; }
.account { display: flex; gap: 44px; font-size: 32px; }
.account a { display: flex; align-items: center; gap: 20px; }
.ic-user { width: 36px; height: 36px; }
.ic-out { width: 42px; height: 34px; }

/* Content */
.content { display: flex; flex-direction: column; gap: 48px; flex: 1; padding: 49px 58px 46px 48px; }
.brand { padding-left: 4px; font-family: "Liberation Sans", sans-serif; }
.brand h1 { font-size: 72px; line-height: 70px; }
.brand p { padding-left: 4px; font-size: 40px; line-height: 40px; }

.chart-card { border-left: 2px solid #eef0f1; background: #fff; }
.chart-head { display: flex; align-items: center; justify-content: space-between; height: 87px; margin: 0 7px 0 -2px; padding: 0 16px 0 20px; border-top: 6px solid #03a75b; border-bottom: 2px solid #f2f2f2; font-size: 31px; font-weight: 600; }
.chart-head h2 { font-size: 31px; font-weight: 600; }
.chart { width: 100%; height: auto; overflow: visible; }
.c-strong, .c-cue, .c-x { text-anchor: middle; }
.c-strong { font-size: 15px; font-weight: 700; fill: #000; }
.c-legend { font-size: 15px; font-weight: 600; fill: #bbb; }
.c-grid { stroke: #000; stroke-opacity: .07; stroke-width: 2; }
.c-y { font-size: 15px; text-anchor: end; fill: #b8b8b8; }
.c-x { font-size: 14px; fill: #b8b8b8; }
.c-cue { font-size: 14px; font-weight: 700; fill: #000; }

.card { border: 2px solid #d9dadc; border-top: 10px solid #03a75b; background: #fff; font-family: "Liberation Sans", sans-serif; }
.stats { display: grid; grid-template-columns: repeat(3, minmax(0, 1fr)); gap: 50px; margin-left: 6px; }
.stats .card { display: flex; flex-direction: column; }
.card-head { display: flex; align-items: center; justify-content: center; height: 118px; padding-bottom: 4px; background: #f4f4f4; font-size: 42px; }
.stat-toggle { display: flex; align-items: center; gap: 26px; }
.stat-toggle svg { width: 24px; height: 14px; }
.stat-number { display: flex; flex: 1; align-items: center; justify-content: center; font-size: 80px; }
.bars { width: 100%; height: auto; }
.b-grid { stroke: #dcdcdc; stroke-width: 2; stroke-dasharray: 2 2; }
.b-fill { fill: #84d1a8; }
.b-axis { stroke: #b3b3b3; stroke-width: 2; }
.b-text { font-size: 18px; text-anchor: middle; fill: #000; }
.b-label { font-size: 18px; font-weight: 700; text-anchor: middle; fill: #000; }

.breakdown { margin-right: 6px; padding-bottom: 23px; font-size: 28px; line-height: 32px; }
.breakdown h2 { background: #f4f4f4; font-size: 42px; line-height: 116px; text-align: center; }
.breakdown th { height: 80px; background: #f4f4f4; }
.breakdown td { padding: 12px 0; }
.breakdown tbody tr:first-child td { padding-top: 30px; }
.breakdown th:first-child, .breakdown td:first-child { padding-left: 46px; }
.w-id { width: 160px; }
.w-time { width: 358px; }
.w-place { width: 180px; }
.w-coord { width: 362px; }
.w-dur { width: 222px; }
.w-plat { width: 268px; }

.bottom { display: grid; grid-template-columns: 1478fr 810fr; gap: 32px; margin-right: 6px; }

/* Map */
.map-panel { position: relative; padding-top: 60px; font-family: Roboto, sans-serif; }
.map { position: relative; aspect-ratio: 1478 / 801; overflow: hidden; }
.map-art { width: 100%; height: 100%; }
.rural { fill: #ebe9e4; }
.park { fill: #ceeccf; }
.park2 { fill: #b5e0b6; }
.water { fill: #aadaff; }
.road path { fill: none; stroke: #fff; stroke-width: 3px; stroke-linejoin: round; vector-effect: non-scaling-stroke; }
.m-num { font-size: 17px; text-anchor: middle; fill: #4a4c50; }
.m-byp { font-size: 11px; font-weight: 700; }
.m-int { font-weight: 700; font-size: 16px; fill: #fff; }
.m-label { text-anchor: middle; fill: #55585e; stroke: #fff; stroke-width: 4px; stroke-linejoin: round; paint-order: stroke; }
.m-area { font-size: 17px; font-weight: 500; fill: #8d99b3; }
.m-state { font-size: 18px; font-weight: 500; text-anchor: end; fill: #8f9296; }
.m-town { font-size: 20px; }
.m-city { font-size: 23px; fill: #44464b; }
.m-metro { font-size: 29px; fill: #44464b; }
.m-park { font-size: 23px; fill: #1e8a43; }
.m-refuge { font-style: italic; }
.m-logo { font-family: Lato, sans-serif; font-size: 34px; font-weight: 500; stroke: #fff; stroke-width: 2px; paint-order: stroke; }

.map-type, .map-btn, .map-zoom { border-radius: 3px; background: #fff; box-shadow: 0 1px 6px rgba(0, 0, 0, .25); }
.map-type { position: absolute; top: 16px; left: 16px; display: flex; height: 64px; font-size: 28px; color: #565656; }
.map-type button { padding: 0 28px; }
.map-type .on { border-right: 2px solid #eaeaea; color: #000; font-weight: 500; }
.map-btn { display: grid; place-items: center; width: 64px; height: 64px; }
.map-full { position: absolute; top: 16px; right: 16px; }
.map-full svg { width: 30px; height: 30px; }
.map-side { position: absolute; right: 16px; bottom: 39px; display: flex; flex-direction: column; gap: 52px; }
.peg { width: 26px; height: 48px; }
.map-zoom { width: 64px; padding: 0 8px; }
.map-zoom button { display: grid; place-items: center; width: 48px; height: 64px; }
.map-zoom button + button { border-top: 2px solid #e6e6e6; }
.map-zoom svg { width: 28px; height: 28px; }
.map-terms { position: absolute; right: 0; bottom: 0; display: flex; gap: 2px; font-size: 16px; line-height: 22px; color: #444; }
.map-terms > * { padding: 0 9px; background: rgba(245, 245, 245, .75); }
.map-tools { position: absolute; top: 1px; left: 25%; display: flex; gap: 4px; padding: 7px; border: 2px solid #999; background: #fff; }
.map-tools button { height: 57px; padding: 0 10px; border: 2px solid #a9a9a9; background: linear-gradient(#e4e4e4, #f6f6f6); font-size: 23px; color: #333; }

/* Videos */
.videos { padding-bottom: 45px; font-family: Inter, sans-serif; }
.videos h2 { background: #f4f4f4; font-size: 37px; line-height: 106px; text-align: center; }
.videos th { height: 52px; background: #f4f4f4; font-size: 18px; font-weight: 400; }
.videos th:first-child, .videos td:first-child { padding-left: 39px; }
.videos .num { width: 100px; padding-right: 31px; text-align: right; }
.videos td { padding-top: 50px; font-size: 25px; line-height: 33px; vertical-align: top; }
.videos td.num { padding-top: 66px; font-size: 27px; }
.video { display: flex; gap: 20px; white-space: nowrap; }
.video p { padding-top: 8px; }
.video small { display: block; font-size: 18px; }
.thumb { display: grid; flex: none; place-items: center; width: 160px; height: 112px; padding-left: 14px; background: #f8f8f8; color: #b5b7b6; }
.thumb svg { width: 86px; height: 62px; }

.footer { height: 64px; padding-left: 48px; background: #fff; font-size: 25px; line-height: 62px; }
.footer a { color: #3572b0; }
```
